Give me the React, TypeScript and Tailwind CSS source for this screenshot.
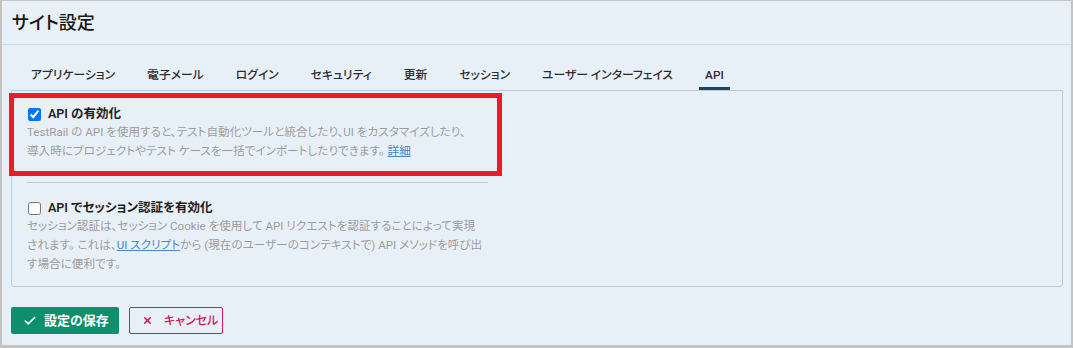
import { Check, X } from 'lucide-react'

const tabs = ['アプリケーション', '電子メール', 'ログイン', 'セキュリティ', '更新', 'セッション', 'ユーザー インターフェイス', 'API']

function Option({ label, checked, children }: { label: string; checked: boolean; children: React.ReactNode }) {
  return (
    <div>
      <label className="flex items-center h-[16px] gap-[7px] text-[12.5px] leading-[16px] font-semibold text-[#1e1e1e]">
        <input type="checkbox" defaultChecked={checked} className="w-[13px] h-[13px] ml-px" />
        {label}
      </label>
      <p className="text-[11.6px] leading-[19px] text-[#9c9c9c] mt-px whitespace-nowrap">{children}</p>
    </div>
  )
}

export default function App() {
  return (
    <div
      className="relative w-[1073px] h-[348px] bg-[#e8f0f7] border-t border-l-2 border-r-2 border-b-[3px] border-[#c4c4c4] [font-feature-settings:'palt']"
      style={{ fontFamily: 'Roboto, "Noto Sans CJK JP", sans-serif' }}
    >
      <div className="h-[44px] border-b border-[#cadde9] pl-[10px] flex items-center">
        <h1 className="text-[18px] font-medium text-[#161616]">サイト設定</h1>
      </div>

      <div className="flex pl-[13px] mt-[19px]">
        {tabs.map((t) => (
          <div
            key={t}
            className={
              t === 'API'
                ? 'mx-[10px] px-[6px] pt-[3px] pb-[4px] text-[11.8px] leading-[16px] text-[#2c2c2c] font-medium border-b-[3px] border-[#26435c] whitespace-nowrap'
                : 'mx-[10px] px-[6px] pt-[3px] pb-[4px] text-[11.8px] leading-[16px] text-[#2c2c2c] font-medium border-b-[3px] border-transparent whitespace-nowrap'
            }
          >
            {t}
          </div>
        ))}
      </div>

      <div className="ml-[9px] mr-[8px] border border-[#b3cde2] rounded-b-[3px] pl-[15px] pt-[15px] pb-[12px]">
        <Option label="API の有効化" checked>
          TestRail の API を使用すると、テスト自動化ツールと統合したり、UI をカスタマイズしたり、
          <br />
          導入時にプロジェクトやテスト ケースを一括でインポートしたりできます。{' '}
          <a className="text-[#4a86c5] underline">詳細</a>
        </Option>

        <div className="w-[461px] h-px bg-[#b3cde2] mt-[21px] mb-[17px]" />

        <Option label="API でセッション認証を有効化" checked={false}>
          セッション認証は、セッション Cookie を使用して API リクエストを認証することによって実現
          <br />
          されます。 これは、<a className="text-[#4a86c5] underline">UI スクリプト</a>から (現在のユーザーのコンテキストで) API メソッドを呼び出
          <br />
          す場合に便利です。
        </Option>
      </div>

      <div className="flex gap-[10px] ml-[9px] mt-[20px]">
        <button className="flex items-center gap-[7px] h-[27px] w-[108px] pl-[12px] rounded-[2px] bg-[#0b8f6c] text-white text-[13px] font-bold whitespace-nowrap">
          <Check size={14} strokeWidth={3} />
          設定の保存
        </button>
        <button className="flex items-center gap-[11px] h-[27px] w-[94px] pl-[12px] rounded-[2px] border border-[#d8175a] text-[#d8175a] text-[12px] font-medium whitespace-nowrap">
          <X size={11} strokeWidth={3.5} />
          キャンセル
        </button>
      </div>

      <div className="absolute left-[7px] top-[92px] w-[493px] h-[83px] border-[5px] border-[#ed1c24]" />
    </div>
  )
}
